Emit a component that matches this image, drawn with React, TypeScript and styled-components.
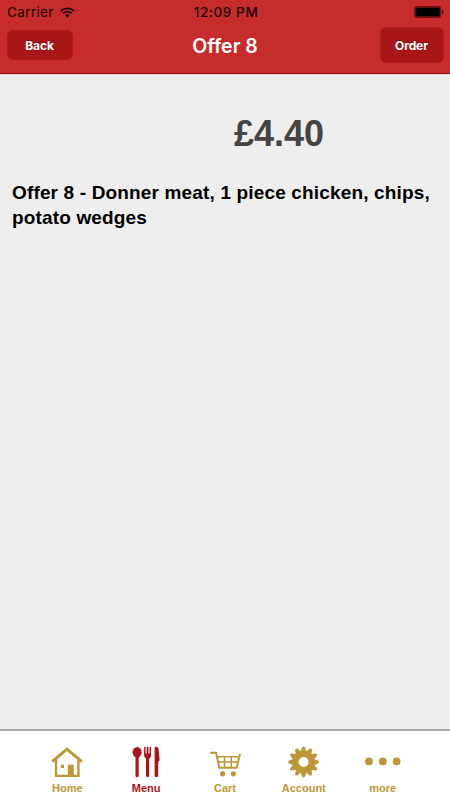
import React from "react";
import styled, { createGlobalStyle } from "styled-components";

const GlobalStyle = createGlobalStyle`
  *, *::before, *::after { box-sizing: border-box; }
  body { margin: 0; background: #eeeeee; }
`;

const Screen = styled.div`
  display: flex;
  flex-direction: column;
  width: 450px;
  height: 800px;
  background: #eeeeee;
  font-family: "Liberation Sans", Arial, sans-serif;
  overflow: hidden;
`;

const Header = styled.header`
  display: flex;
  flex-direction: column;
  height: 75px;
  flex: none;
  background: #c72c2c;
  border-bottom: 1px solid #dcd6d6;
  box-shadow: inset 0 -1px 0 #960a10;
  font-family: Inter, Roboto, sans-serif;
`;

const StatusBar = styled.div`
  display: grid;
  grid-template-columns: 1fr auto 1fr;
  align-items: center;
  height: 24px;
  padding: 0 6px 0 7px;
  font-size: 13.5px;
  color: #170505;
`;

const Carrier = styled.div`
  display: flex;
  align-items: center;
  gap: 6px;
  letter-spacing: 0.35px;
`;

const Clock = styled.div`
  padding-left: 1px;
  font-weight: 500;
  font-size: 13.5px;
  letter-spacing: 0.6px;
`;

const BatterySlot = styled.div`
  display: flex;
  justify-content: flex-end;
`;

const NavBar = styled.nav`
  display: grid;
  grid-template-columns: 1fr auto 1fr;
  align-items: center;
  height: 42px;
  padding: 0 6.5px;
`;

const Title = styled.h1`
  margin: 0;
  padding-top: 2px;
  font-size: 19.5px;
  font-weight: 600;
  line-height: 24px;
  color: #fff;
`;

const NavButton = styled.button<{ $width: number; $height: number; $end?: boolean }>`
  justify-self: ${(p) => (p.$end ? "end" : "start")};
  width: ${(p) => p.$width}px;
  height: ${(p) => p.$height}px;
  padding: 0;
  border: 1px solid #b01b1c;
  border-radius: 6px;
  background: #a81617;
  color: #fff;
  font: 700 12px Inter, Roboto, sans-serif;
  letter-spacing: -0.1px;
  text-shadow: 0 -1px 0 rgba(70, 0, 0, 0.45);
`;

const Content = styled.main`
  flex: 1;
  min-height: 0;
  padding: 38px 12px 0;
`;

const Price = styled.div`
  padding-left: 222px;
  font-size: 36px;
  line-height: 42px;
  font-weight: 700;
  color: #444;
`;

const Description = styled.p`
  margin: 25px 0 0;
  font-size: 19px;
  line-height: 25px;
  letter-spacing: 0.155px;
  font-weight: 700;
  color: #000;
  white-space: pre;
`;

const TabBar = styled.nav`
  display: grid;
  grid-template-columns: repeat(5, 78.8px);
  justify-content: center;
  flex: none;
  height: 71px;
  border-top: 2px solid #a9a9a9;
  background: #fff;
`;

const Tab = styled.a<{ $active?: boolean }>`
  display: flex;
  flex-direction: column;
  align-items: center;
  padding-top: 15px;
  color: ${(p) => (p.$active ? "#aa1418" : "#bd9638")};
  font-size: 11px;
  line-height: 13px;
  font-weight: 700;
  svg { display: block; margin-bottom: 4px; }
`;

const WifiIcon = () => (
  <svg width="15" height="11" viewBox="0 0 15 11" fill="none" stroke="#170505">
    <path d="M.8 4C4.5.5 10.5.5 14.2 4" strokeWidth="1.8" />
    <path d="M3.2 6.4c2.4-2.2 6.2-2.2 8.6 0" strokeWidth="1.7" />
    <path d="M5.1 8.1c1.4-1.2 3.4-1.2 4.8 0L7.5 10.6z" fill="#170505" stroke="none" />
  </svg>
);

const BatteryIcon = () => (
  <svg width="30" height="12" viewBox="0 0 30 12">
    <rect x=".7" y=".7" width="26" height="10.6" rx="1.5" fill="none" stroke="#650c0d" />
    <rect x="1.5" y="1.5" width="24.5" height="9" fill="#000" />
    <path d="M28.2 4q1.3.7 1.3 2t-1.3 2z" fill="#260606" />
  </svg>
);

const HomeIcon = () => (
  <svg width="32" height="32" viewBox="0 0 32 32" fill="none" stroke="currentColor">
    <path d="M1.2 15.6 16 3.2l14.8 12.4" strokeWidth="3" />
    <path d="M5 13.5v16.4h22.4V13.5" strokeWidth="2.4" />
    <path d="M16.8 18.7h6v11h-6zM9.8 18.7h3.2v3.2H9.8z" fill="currentColor" stroke="none" />
  </svg>
);

const CutleryIcon = () => (
  <svg width="32" height="32" viewBox="0 0 32 32" fill="currentColor">
    <ellipse cx="7.1" cy="6.2" rx="4.5" ry="5.2" />
    <path d="M5.5 10h3.2v19.5q0 1.7-1.6 1.7t-1.6-1.7z" />
    <path d="M14.1 1.6q0-.8.7-.8t.8.8V7.5h1.1V1.6q0-.8.9-.8t.9.8V7.5h1.1V1.6q0-.8.8-.8t.7.8V9q0 2.8-1.9 3.7v16.8q0 1.7-1.6 1.7t-1.6-1.7V12.7Q14.1 11.8 14.1 9z" />
    <path d="M24.6 2.2q0-1.5 1.5-1.5 2.6 0 2.7 4.2l.8 9.2q.1 1.3-1.4 1.3v14.1q0 1.7-1.8 1.7t-1.8-1.7z" />
  </svg>
);

const CartIcon = () => (
  <svg width="32" height="32" viewBox="0 0 32 32" fill="none" stroke="currentColor" strokeWidth="1.8">
    <path d="M1.1 6.7h6l3.2 15h17.3l3.4-13.6" strokeWidth="2" />
    <path d="M7.8 10.7h22.2M9.1 16h19.8M15.5 10.5v11M22.3 10.5v11" strokeWidth="1.5" />
    <circle cx="13.6" cy="27.8" r="2.6" fill="currentColor" stroke="none" />
    <circle cx="24.4" cy="27.8" r="2.6" fill="currentColor" stroke="none" />
  </svg>
);

const GEAR_TEETH = Array.from({ length: 12 }, (_, i) => i * 30);

const GearIcon = () => (
  <svg width="32" height="32" viewBox="0 0 32 32">
    <circle cx="15.6" cy="16" r="7.9" fill="none" stroke="currentColor" strokeWidth="6" />
    {GEAR_TEETH.map((angle) => (
      <path
        key={angle}
        d="M12.4 6.2 14.1 1.6Q15.6-.6 17.1 1.6L18.8 6.2z"
        fill="currentColor"
        transform={`rotate(${angle} 15.6 16)`}
      />
    ))}
  </svg>
);

const MoreIcon = () => (
  <svg width="36" height="32" viewBox="0 0 36 32" fill="currentColor">
    <circle cx="4" cy="15.4" r="3.9" />
    <circle cx="17.8" cy="15.4" r="3.9" />
    <circle cx="31.6" cy="15.4" r="3.9" />
  </svg>
);

const tabs = [
  { label: "Home", Icon: HomeIcon },
  { label: "Menu", Icon: CutleryIcon, active: true },
  { label: "Cart", Icon: CartIcon },
  { label: "Account", Icon: GearIcon },
  { label: "more", Icon: MoreIcon },
];

export default function App() {
  return (
    <>
      <GlobalStyle />
      <Screen>
        <Header>
          <StatusBar>
            <Carrier>
              Carrier <WifiIcon />
            </Carrier>
            <Clock>12:09 PM</Clock>
            <BatterySlot>
              <BatteryIcon />
            </BatterySlot>
          </StatusBar>
          <NavBar>
            <NavButton $width={66} $height={30}>Back</NavButton>
            <Title>Offer 8</Title>
            <NavButton $width={64} $height={36} $end>Order</NavButton>
          </NavBar>
        </Header>
        <Content>
          <Price>£4.40</Price>
          <Description>
            {"Offer 8 - Donner meat, 1 piece chicken, chips,\npotato wedges"}
          </Description>
        </Content>
        <TabBar>
          {tabs.map(({ label, Icon, active }) => (
            <Tab key={label} $active={active}>
              <Icon />
              {label}
            </Tab>
          ))}
        </TabBar>
      </Screen>
    </>
  );
}
